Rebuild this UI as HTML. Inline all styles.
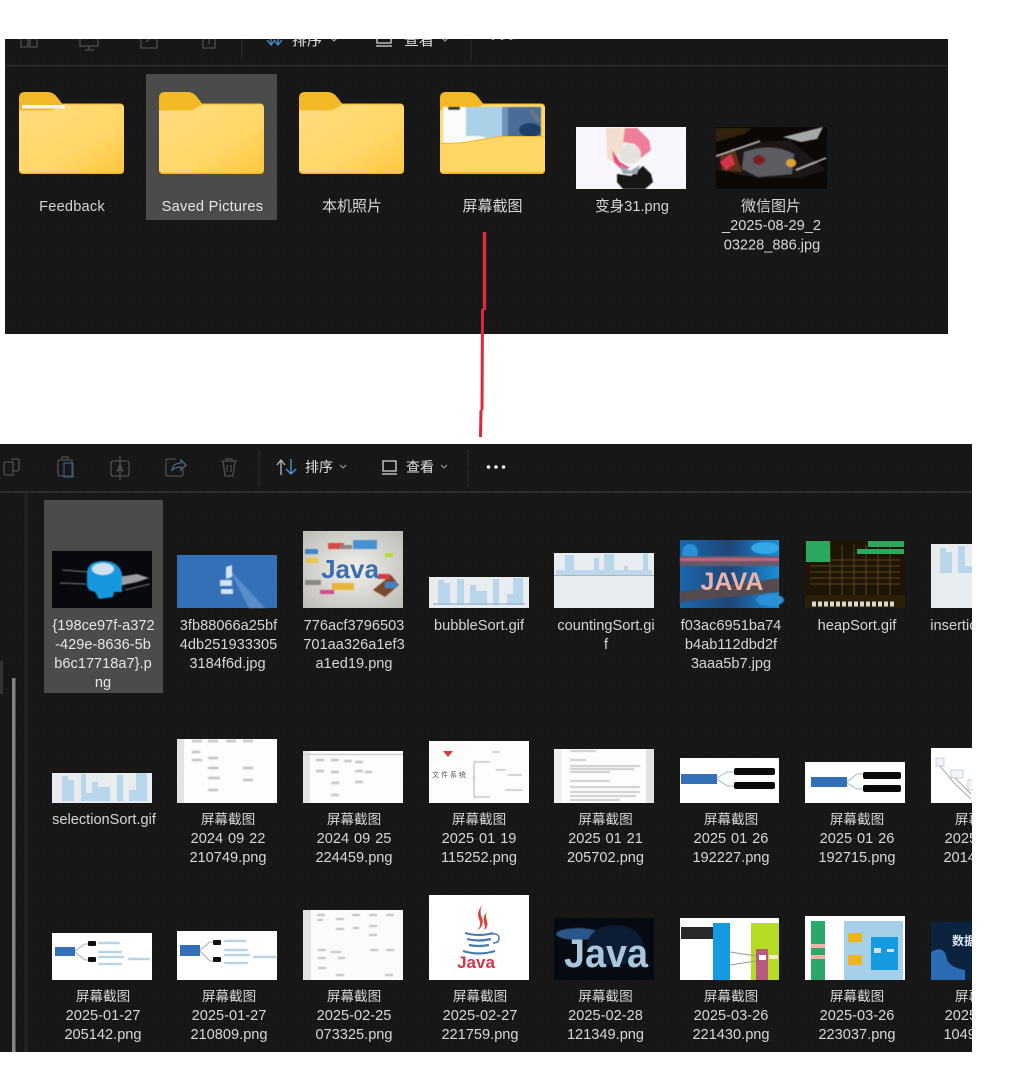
<!DOCTYPE html>
<html lang="zh">
<head>
<meta charset="utf-8">
<title>文件资源管理器</title>
<style>
html,body{margin:0;padding:0;background:#fff;width:1018px;height:1070px;overflow:hidden}
svg{display:block}
text{font-family:"Liberation Sans","Noto Sans CJK SC",sans-serif;font-size:14.6px;fill:#d6d6d6;text-anchor:middle}
.c{font-size:13.6px}
.sel{fill:#e6e6e6}
.tb{font-size:14px;fill:#e0e0e0;text-anchor:start}
.ic{fill:none;stroke:#4e4e4e;stroke-width:1.3}
.ib{fill:none;stroke:#d8d8d8;stroke-width:1.3}
.bar{fill:#b7d6ec}
</style>
</head>
<body>
<svg width="1018" height="1070" viewBox="0 0 1018 1070" xmlns="http://www.w3.org/2000/svg">
<defs>
<filter id="s" x="-5%" y="-5%" width="110%" height="110%"><feGaussianBlur stdDeviation=".5"/></filter>
<linearGradient id="fg" x1="0" y1="0" x2="1" y2="1">
<stop offset="0" stop-color="#fbd6a0"/><stop offset=".14" stop-color="#ffda78"/><stop offset=".62" stop-color="#ffd768"/><stop offset="1" stop-color="#fbc73c"/>
</linearGradient>
<linearGradient id="sky" x1="0" y1="0" x2="1" y2="0">
<stop offset="0" stop-color="#1a67ad"/><stop offset=".5" stop-color="#1f4677"/><stop offset="1" stop-color="#1a8ed8"/>
</linearGradient>
<radialGradient id="jv" cx=".5" cy=".5" r=".7">
<stop offset="0" stop-color="#f3f1ec"/><stop offset="1" stop-color="#bdbbb6"/>
</radialGradient>
<pattern id="dots" width="6" height="6" patternUnits="userSpaceOnUse"><rect x="2" y="2" width="1" height="1" fill="#202020"/></pattern>
<clipPath id="p1"><rect x="5" y="39" width="943" height="295"/></clipPath>
<clipPath id="p2"><rect x="0" y="444" width="972" height="608"/></clipPath>
<g id="folder">
<path d="M0 6Q0 0 6 0H29Q34 0 38 5L43 11.500H101Q105 11.500 105 16V78Q105 82 101 82H4Q0 82 0 78Z" fill="#f2b825"/>
<path d="M0 18.500H33L43 12.500H101Q105 12.500 105 16V77Q105 80.500 101 80.500H4Q0 80.500 0 77Z" fill="url(#fg)"/>
</g>
</defs>

<rect width="1018" height="1070" fill="#fff"/>

<!-- TOP PANEL -->
<g clip-path="url(#p1)">
<rect x="5" y="39" width="943" height="295" fill="#171718"/>
<rect x="5" y="39" width="943" height="295" fill="url(#dots)"/>
<g>
<path class="ic" d="M21 32h7v15h-7zM30 32h7v15h-7z"/>
<path class="ic" d="M80 34h18v12H80zM89 46v4M85 50h9"/>
<path class="ic" d="M141 33h16v15h-16zM146 42l8-7"/>
<path class="ic" d="M203 30h12v18h-12zM209 37v7"/>
<path d="M242 25V60" stroke="#2b2b2b"/>
<path d="M471 25V60" stroke="#2b2b2b"/>
<path class="ib" d="M271 34v11M267 40l4 5 4-5" style="stroke:#4a90d0"/>
<path class="ib" d="M278 32v13M274 40l4 5 4-5" style="stroke:#4a90d0"/>
<text class="tb" x="292" y="45" style="font-size:15px">排序</text>
<path d="M331 38l3 3 3-3" class="ic" style="stroke:#999"/>
<path class="ib" d="M377 32h14v11h-14zM376 46h16"/>
<text class="tb" x="404" y="45" style="font-size:15px">查看</text>
<path d="M442 38l3 3 3-3" class="ic" style="stroke:#999"/>
<circle cx="493" cy="38" r="1.800" fill="#e8e8e8"/><circle cx="502" cy="38" r="1.800" fill="#e8e8e8"/><circle cx="511" cy="38" r="1.800" fill="#e8e8e8"/>
</g>
<rect x="5" y="65" width="943" height="1.500" fill="#2e2e2e"/>

<rect x="146" y="74" width="131" height="146" rx="1" fill="#4b4b4b"/>

<use href="#folder" x="19" y="92"/>
<rect x="22" y="105" width="43" height="3.500" fill="#f4f2ee"/>
<use href="#folder" x="159" y="92"/>
<use href="#folder" x="299" y="92"/>

<!-- folder with preview -->
<use href="#folder" x="440" y="92"/>
<g filter="url(#s)">
<rect x="443" y="107" width="98" height="36" fill="#6d93bd"/>
<rect x="443" y="107" width="24" height="36" fill="#fbfbfb"/>
<rect x="466" y="107" width="36" height="36" fill="#a9d2e8"/>
<ellipse cx="474" cy="140" rx="14" ry="4" fill="#fff"/>
<rect x="508" y="107" width="33" height="30" fill="#4a6d96"/>
<ellipse cx="530" cy="130" rx="11" ry="7" fill="#1f3f68"/>
<path d="M448 107h12v3h-12z" fill="#333"/>
<path d="M531 110l8 12" stroke="#6e7680" stroke-width="4"/>
</g>
<path d="M440 143Q460 143 470 141L487 138Q500 136 505 136H541Q545 136 545 140V170Q545 174 541 174H444Q440 174 440 170Z" fill="#f4b926"/>
<path d="M440 144Q460 144 470 142L487 139Q500 137 505 137H541Q545 137 545 140V169Q545 172 541 172H444Q440 172 440 169Z" fill="#ffd665"/>

<text x="72" y="211" style="letter-spacing:.2px">Feedback</text>
<text x="212.500" y="211" class="sel" style="letter-spacing:.25px">Saved Pictures</text>
<text x="352" y="211" class="c" style="font-size:15px">本机照片</text>
<text x="492.500" y="211" class="c" style="font-size:15px">屏幕截图</text>

<!-- 变身31 -->
<rect x="576" y="127" width="110" height="62" fill="#f8f6fb"/>
<g filter="url(#s)">
<path d="M606 128h22l-3 14-12 20-6-4z" fill="#f3ddd0"/>
<path d="M625 128h12l12 12 2 10-10 8-6-14-12-2z" fill="#ee7f98"/>
<path d="M612 150l8 12 10 6-8 2-8-8z" fill="#e8527a"/>
<ellipse cx="630" cy="154" rx="11" ry="10" fill="#e4e2dc"/>
<path d="M617 174l14 2 12-10 8 8 2 8-8 7h-22l-6-7z" fill="#141416"/>
<path d="M620 165l10 6 10-6-3 9h-14z" fill="#9aa7b2"/>
</g>
<text x="632" y="211">变身31.png</text>

<!-- 微信图片 -->
<rect x="716" y="127" width="111" height="62" fill="#0c0805"/>
<g filter="url(#s)">
<path d="M716 128h36l-8 6-28 8z" fill="#33210a"/>
<path d="M716 155L760 142 790 140 826 170 800 178 760 178 716 170z" fill="#1a1819"/>
<path d="M744 152q28-10 50 2l-2 20-34 3-16-8z" fill="#5c5c62"/>
<path d="M720 156l14-8 8 24-20-2z" fill="#5d3218"/>
<path d="M720 162l11-8 4 10-9 6z" fill="#d8324a"/>
<path d="M783 137l40-10-6 12-16 3z" fill="#a8a8a8"/>
<path d="M716 156l44-15M796 170l30-12" stroke="#b3b3b3" stroke-width="1.500" fill="none"/>
<ellipse cx="759" cy="160" rx="6" ry="5" fill="#7a2422"/><ellipse cx="791" cy="163" rx="5" ry="4" fill="#d9a23a"/>
</g>
<text x="771" y="211" class="c" style="font-size:15px">微信图片</text>
<text x="771.500" y="230">_2025-08-29_2</text>
<text x="772" y="249.500">03228_886.jpg</text>
</g>

<!-- RED LINE -->
<path d="M484.500 232V310" stroke="#dc2a38" stroke-width="3.500" fill="none"/>
<path d="M482.500 309L482 410" stroke="#dc2a38" stroke-width="3" fill="none"/>
<path d="M481 410L480.500 437" stroke="#dc2a38" stroke-width="3" fill="none"/>

<!-- BOTTOM PANEL -->
<g clip-path="url(#p2)">
<rect x="0" y="444" width="972" height="608" fill="#171718"/>
<rect x="0" y="444" width="972" height="608" fill="url(#dots)"/>

<!-- toolbar -->
<path class="ic" d="M4 464q0-2 2-2h7v13H6q-2 0-2-2zM11 459h6q2 0 2 2v8q0 2-2 2h-5"/>
<path class="ic" d="M58 462q0-2 2-2h12v16H60q-2 0-2-2zM62 460v-3h6v3"/>
<path d="M64 463h9v14h-9z" fill="none" stroke="#2d5f8e" stroke-width="1.200"/>
<path class="ic" d="M111 463q0-2 2-2h14q2 0 2 2v11q0 2-2 2h-14q-2 0-2-2zM120 456v24"/>
<path d="M117 472l3-8 3 8M118 470h4" class="ic"/>
<path class="ic" d="M176 459h-8q-2 0-2 2v13q0 2 2 2h13q2 0 2-2v-4"/>
<path class="ic" d="M172 470q1-7 9-7v-3l5 5-5 5v-3q-5 0-9 3z" style="stroke:#4a6888"/>
<path class="ic" d="M221 461h16M226 461v-2h6v2M223 461l2 15h8l2-15M227 465v7M231 465v7"/>
<path d="M259 449V487M468 449V487" stroke="#2b2b2b"/>
<path d="M281 475V461M277 465l4-5 4 5" class="ib" style="stroke:#bcbcbc"/>
<path d="M291 459V474M286 469l5 5 5-5" class="ib" style="stroke:#4a9ae0"/>
<text class="tb" x="305" y="472">排序</text>
<path d="M340 465l3 3 3-3" class="ic" style="stroke:#888"/>
<path class="ib" d="M383 461h13v10h-13zM382 474h15"/>
<text class="tb" x="406" y="472">查看</text>
<path d="M441 465l3 3 3-3" class="ic" style="stroke:#888"/>
<circle cx="488.500" cy="467" r="1.800" fill="#eee"/><circle cx="496" cy="467" r="1.800" fill="#eee"/><circle cx="503.500" cy="467" r="1.800" fill="#eee"/>
<rect x="0" y="491" width="972" height="2" fill="#2c2c2c"/>

<!-- sidebar -->
<rect x="24" y="493" width="4" height="559" fill="#212121"/>
<rect x="0" y="661" width="3" height="33" fill="#333"/>
<rect x="12" y="678" width="3.500" height="374" fill="#858585"/>

<rect x="44" y="500" width="119" height="193" rx="1" fill="#4b4b4b"/>

<!-- ROW 1 -->
<rect x="52" y="551" width="100" height="57" fill="#08090c"/>
<g filter="url(#s)">
<path d="M62 570L88 572M118 576l24 3M60 583l26 1M125 590l25-6" stroke="#777" stroke-width="1" fill="none"/>
<path d="M119 577l18-3 12 4-12 4-18 4z" fill="#9c9ea3"/>
<path d="M87 586V574Q87 561 103 561Q119 561 122 574L122 592 114 592 113 597 99 599 95 592 89 590Z" fill="#1398de"/>
<ellipse cx="103" cy="569" rx="11" ry="6" fill="#cfe3ee"/>
</g>

<rect x="177" y="555" width="100" height="53" fill="#3470b8"/>
<g filter="url(#s)">
<path d="M229 569l20 39h16z" fill="#5a8ecb"/>
<path d="M226 567l6-2v12l-6 2zM220 580h12v6h-12zM221 589h12v5h-12z" fill="#d5e2f0"/>
</g>

<rect x="303" y="531" width="100" height="77" fill="url(#jv)"/>
<g filter="url(#s)">
<rect x="353" y="540" width="24" height="9" fill="#4a90d0"/>
<rect x="328" y="543" width="16" height="6" fill="#d64a4a"/>
<rect x="305" y="549" width="13" height="5" fill="#3f84c8"/>
<rect x="306" y="558" width="12" height="5" fill="#e8c84a"/>
<rect x="340" y="545" width="12" height="4" fill="#888"/>
<rect x="385" y="553" width="8" height="4" fill="#b8d830"/>
<path d="M373 590l18-15 8 10-14 12z" fill="#7a4a2a"/>
<rect x="332" y="583" width="22" height="7" fill="#e8b53a"/>
<rect x="385" y="582" width="12" height="6" fill="#3f84c8"/>
<rect x="378" y="574" width="12" height="5" fill="#d83a3a"/>
<rect x="305" y="580" width="16" height="5" fill="#888"/>
<rect x="320" y="590" width="14" height="4" fill="#d64a8a"/>
</g>
<text x="350" y="578" style="font-size:26px;font-weight:bold;fill:#3c6faf">Java</text>

<rect x="429" y="577" width="100" height="31" fill="#e9ecef"/>
<rect class="bar" x="438" y="580" width="6" height="25"/><rect class="bar" x="444" y="583" width="6" height="22"/><rect class="bar" x="457" y="579" width="7" height="26"/><rect class="bar" x="470" y="585" width="6" height="20"/><rect class="bar" x="476" y="591" width="11" height="14"/><rect class="bar" x="493" y="579" width="6" height="26"/><rect class="bar" x="507" y="594" width="6" height="11"/><rect class="bar" x="513" y="578" width="10" height="27"/>
<path d="M433 604h92" stroke="#9fbdd4" stroke-width="1.500"/>

<rect x="554" y="553" width="100" height="55" fill="#e9ecef"/>
<rect x="556" y="570" width="96" height="5" fill="#bcd8ea"/>
<rect class="bar" x="565" y="555" width="9" height="15"/><rect class="bar" x="594" y="558" width="5" height="12"/><rect class="bar" x="604" y="554" width="10" height="16"/><rect class="bar" x="624" y="566" width="4" height="5"/><rect class="bar" x="643" y="553" width="5" height="18"/>
<path d="M554 575.500h100" stroke="#b0b5ba"/>

<rect x="680" y="540" width="99" height="68" fill="url(#sky)"/>
<g filter="url(#s)">
<ellipse cx="690" cy="552" rx="8" ry="8" fill="#2a90d8"/>
<ellipse cx="765" cy="548" rx="14" ry="6" fill="#30a8e8"/>
<rect x="680" y="556" width="99" height="10" fill="#665a68"/>
<path d="M680 558h99v3h-99z" fill="#c2607e"/>
<path d="M680 592l99-14v14l-99 10z" fill="#544c50"/>
<ellipse cx="770" cy="600" rx="14" ry="6" fill="#2a90d8"/>
</g>
<text x="732" y="590" style="font-size:25px;font-weight:bold;fill:#eeb2a6">JAVA</text>

<rect x="805" y="540" width="100" height="68" fill="#1f1506"/>
<path d="M810 560h90M810 566h90M810 572h90M810 578h90M810 584h90M830 545v50M842 545v50M854 545v50M866 545v50M878 545v50M890 545v50" stroke="#5a4518" stroke-width="1"/>
<rect x="805" y="595" width="100" height="13" fill="#2d1f07"/>
<rect x="806" y="541" width="24" height="21" fill="#2aa860"/>
<rect x="868" y="541" width="36" height="6" fill="#2aa860"/>
<rect x="857" y="549" width="47" height="5" fill="#2aa860"/>
<path d="M812 604h82" stroke="#d8d8d8" stroke-width="5" stroke-dasharray="4 2"/>

<rect x="931" y="544" width="50" height="64" fill="#e9ecef"/>
<rect class="bar" x="940" y="548" width="6" height="25"/><rect class="bar" x="946" y="552" width="6" height="21"/><rect class="bar" x="958" y="546" width="7" height="27"/><rect class="bar" x="965" y="566" width="7" height="7"/>

<text x="103.500" y="630" class="sel">{198ce97f-a372</text>
<text x="103" y="649" class="sel">-429e-8636-5b</text>
<text x="103" y="668" class="sel">b6c17718a7}.p</text>
<text x="103" y="687" class="sel">ng</text>
<text x="228.500" y="630">3fb88066a25bf</text>
<text x="228.500" y="649">4db251933305</text>
<text x="227.500" y="668">3184f6d.jpg</text>
<text x="354" y="630">776acf3796503</text>
<text x="354" y="649">701aa326a1ef3</text>
<text x="354" y="668">a1ed19.png</text>
<text x="479" y="630">bubbleSort.gif</text>
<text x="606" y="630">countingSort.gi</text>
<text x="606" y="649">f</text>
<text x="731" y="630">f03ac6951ba74</text>
<text x="731" y="649">b4ab112dbd2f</text>
<text x="731" y="668">3aaa5b7.jpg</text>
<text x="857" y="630">heapSort.gif</text>
<text x="981" y="630">insertionSort.gif</text>

<!-- ROW 2 -->
<rect x="52" y="773" width="100" height="30" fill="#e9ecef"/>
<rect class="bar" x="62" y="776" width="6" height="25"/><rect class="bar" x="68" y="780" width="6" height="21"/><rect class="bar" x="81" y="774" width="5" height="27"/><rect class="bar" x="86" y="793" width="6" height="8"/><rect class="bar" x="92" y="782" width="6" height="19"/><rect class="bar" x="98" y="787" width="12" height="14"/><rect class="bar" x="117" y="775" width="6" height="26"/><rect class="bar" x="129" y="790" width="7" height="11"/><rect class="bar" x="136" y="773" width="11" height="28"/>

<rect x="177" y="739" width="100" height="64" fill="#fdfdfd"/>
<rect x="177" y="739" width="7" height="64" fill="#e2e2e2"/>
<g filter="url(#s)"><path d="M192 741h10M192 752h8M192 760h10M208 741h10M208 758h10M208 768h10M208 778h12M208 790h10M226 741h10M243 741h10M243 768h10M243 780h10" stroke="#c4c4c4" stroke-width="2.500"/></g>

<rect x="303" y="751" width="100" height="52" fill="#fdfdfd"/>
<rect x="303" y="751" width="7" height="52" fill="#e2e2e2"/>
<path d="M303 754.500h100" stroke="#d0d0d0" stroke-width="1.500"/>
<g filter="url(#s)"><path d="M316 760h8M316 771h8M331 760h8M331 772h8M331 783h8M331 795h8M344 761h8M355 762h8M355 771h8M355 782h8M365 772h7" stroke="#c4c4c4" stroke-width="2.500"/></g>

<rect x="429" y="741" width="100" height="62" fill="#fdfdfd"/>
<path d="M443 751h10l-5 6z" fill="#d43a44"/>
<text x="449" y="777" style="font-size:7px;fill:#555">文 件 系 统</text>
<g filter="url(#s)"><path d="M476 761q-2 0-2 3v31q0 3 2 3M475 778h-2M492 752h8M496 770h10M508 775h14M505 790h18" stroke="#aaa" fill="none"/>
<path d="M476 762h14M476 797h14" stroke="#aaa"/></g>

<rect x="554" y="749" width="100" height="54" fill="#fdfdfd"/>
<rect x="554" y="749" width="8" height="54" fill="#eeeeee"/>
<rect x="646" y="749" width="8" height="54" fill="#e2e2e2"/>
<g filter="url(#s)"><path d="M570 751h26M570 760h16M570 766h70M570 769h64M570 772h40M570 781h40M570 787h70M570 792h70M570 796h66M570 800h50" stroke="#b0b0b0" stroke-width="1.200"/></g>

<rect x="680" y="758" width="99" height="45" fill="#fff"/>
<rect x="681" y="774" width="36" height="10" fill="#3470b8"/>
<rect x="734" y="768" width="41" height="7" rx="2" fill="#0a0a0a"/>
<rect x="734" y="782" width="41" height="7" rx="2" fill="#0a0a0a"/>
<path d="M717 778l10-6h7M717 779l10 7h7" stroke="#9fb6c9" fill="none"/>

<rect x="805" y="762" width="100" height="41" fill="#fff"/>
<rect x="811" y="777" width="36" height="10" fill="#3470b8"/>
<rect x="863" y="772" width="38" height="7" rx="2" fill="#0a0a0a"/>
<rect x="863" y="785" width="38" height="7" rx="2" fill="#0a0a0a"/>
<path d="M847 782l10-8h6M847 783l10 6h6" stroke="#9fb6c9" fill="none"/>

<rect x="931" y="748" width="50" height="55" fill="#fff"/>
<path d="M936 758h8v8h-8zM951 770h12v8h-12zM968 780h8v10h-8z" fill="#f2f5f8" stroke="#c5d2dc"/>
<path d="M940 766l15 18 16 15M955 778l16 16" stroke="#aaa" fill="none"/>

<text x="104" y="824">selectionSort.gif</text>
<text x="228" y="824" class="c">屏幕截图</text>
<text x="228" y="843">2024<tspan fill-opacity=".1">-</tspan>09<tspan fill-opacity=".1">-</tspan>22</text>
<text x="228" y="862">210749.png</text>
<text x="354" y="824" class="c">屏幕截图</text>
<text x="354" y="843">2024<tspan fill-opacity=".1">-</tspan>09<tspan fill-opacity=".1">-</tspan>25</text>
<text x="354" y="862">224459.png</text>
<text x="479" y="824" class="c">屏幕截图</text>
<text x="479" y="843">2025<tspan fill-opacity=".1">-</tspan>01<tspan fill-opacity=".1">-</tspan>19</text>
<text x="479" y="862">115252.png</text>
<text x="605.500" y="824" class="c">屏幕截图</text>
<text x="605.500" y="843">2025<tspan fill-opacity=".1">-</tspan>01<tspan fill-opacity=".1">-</tspan>21</text>
<text x="605.500" y="862">205702.png</text>
<text x="731" y="824" class="c">屏幕截图</text>
<text x="731" y="843">2025<tspan fill-opacity=".1">-</tspan>01<tspan fill-opacity=".1">-</tspan>26</text>
<text x="731" y="862">192227.png</text>
<text x="857" y="824" class="c">屏幕截图</text>
<text x="857" y="843">2025<tspan fill-opacity=".1">-</tspan>01<tspan fill-opacity=".1">-</tspan>26</text>
<text x="857" y="862">192715.png</text>
<text x="982" y="824" class="c">屏幕截图</text>
<text x="982" y="843">2025<tspan fill-opacity=".1">-</tspan>02<tspan fill-opacity=".1">-</tspan>10</text>
<text x="982" y="862">201452.png</text>

<!-- ROW 3 -->
<rect x="52" y="933" width="100" height="47" fill="#fff"/>
<rect x="55" y="947" width="20" height="9" fill="#3470b8"/>
<path d="M75 951l10-7h6M75 952l10 8h6" stroke="#aaa" fill="none"/>
<rect x="88" y="941" width="8" height="5" rx="1" fill="#111"/><rect x="88" y="957" width="8" height="5" rx="1" fill="#111"/>
<g filter="url(#s)"><path d="M98 943h22M98 952h24M98 957h26M98 964h24M128 959h22" stroke="#a9c8de" stroke-width="2"/></g>

<rect x="177" y="931" width="100" height="49" fill="#fff"/>
<rect x="180" y="945" width="20" height="11" fill="#3470b8"/>
<path d="M200 950l10-8h5M200 951l10 10h5" stroke="#aaa" fill="none"/>
<rect x="213" y="940" width="8" height="5" rx="1" fill="#111"/><rect x="213" y="957" width="8" height="5" rx="1" fill="#111"/>
<g filter="url(#s)"><path d="M224 941h22M224 950h24M224 955h26M224 963h24M253 957h24" stroke="#a9c8de" stroke-width="2"/></g>

<rect x="303" y="910" width="100" height="70" fill="#fbfbfb"/>
<rect x="303" y="910" width="8" height="70" fill="#e2e2e2"/>
<g filter="url(#s)"><path d="M317 915h8M317 920h6M336 919h8M336 929h8M352 915h8M353 928h6M369 915h8M369 926h8M369 935h8M386 915h8M318 950h8M318 958h8M318 968h8M331 952h10M338 958h7M370 950h8M386 950h8M336 975h8M385 975h8" stroke="#c0c0c0" stroke-width="2"/></g>

<rect x="429" y="895" width="100" height="85" fill="#fff"/>
<path d="M482 905q-6 8-3 14t-2 12q8-6 5-13t0-13zM487 912q-5 5-3 11t-1 8q6-4 4-10t0-9z" fill="#d04a3c"/>
<path d="M465 933q14 4 28 0M467 939q11 3 24 0M469 945q9 2 20 0M463 951q16 5 32 0" stroke="#4a7bab" stroke-width="2.200" fill="none"/>
<path d="M491 934q8-1 8 4t-6 5" stroke="#4a7bab" stroke-width="1.500" fill="none"/>
<text x="476" y="968" style="font-size:17px;font-weight:bold;fill:#c9394a">Java</text>

<rect x="554" y="918" width="100" height="62" fill="#060a12"/>
<g filter="url(#s)">
<ellipse cx="578" cy="934" rx="22" ry="6" fill="#2b5688"/>
<ellipse cx="615" cy="945" rx="28" ry="20" fill="#0e1f36"/>
</g>
<text x="606" y="967" style="font-size:40px;font-weight:bold;fill:#a8c6dc" textLength="84" lengthAdjust="spacingAndGlyphs">Java</text>

<rect x="680" y="918" width="99" height="62" fill="#fff"/>
<rect x="681" y="927" width="32" height="12" fill="#2a2a2a"/>
<rect x="713" y="923" width="17" height="57" fill="#139ae0"/>
<rect x="751" y="923" width="28" height="57" fill="#b4dc22"/>
<rect x="756" y="949" width="12" height="31" fill="#b85a80"/>
<rect x="759" y="955" width="7" height="5" fill="#fff"/>
<rect x="769" y="955" width="9" height="4" fill="#f6e6d8"/>
<path d="M730 952l26 4M730 965l26-4" stroke="#999"/>

<rect x="805" y="916" width="100" height="64" fill="#fff"/>
<rect x="811" y="921" width="14" height="59" fill="#2aa868"/>
<rect x="811" y="944" width="14" height="4" fill="#f2b4a8"/>
<rect x="811" y="955" width="14" height="4" fill="#f2b4a8"/>
<rect x="844" y="921" width="59" height="59" fill="#a6cfe8"/>
<rect x="871" y="937" width="27" height="33" fill="#139ae0"/>
<rect x="848" y="933" width="14" height="9" fill="#f0b41e"/>
<rect x="848" y="955" width="14" height="10" fill="#f0b41e"/>
<rect x="874" y="948" width="7" height="5" fill="#ddd"/>
<rect x="887" y="949" width="7" height="3" fill="#ddd"/>

<rect x="931" y="922" width="50" height="58" fill="#0c2340"/>
<path d="M931 952q14-8 16 8 4 8 18 10v10h-34z" fill="#2a6db5"/>
<text x="964" y="945" style="font-size:12px;font-weight:bold;fill:#dfe8f0">数据</text>

<text x="103" y="1001" class="c">屏幕截图</text>
<text x="103" y="1020">2025-01-27</text>
<text x="103" y="1039">205142.png</text>
<text x="229" y="1001" class="c">屏幕截图</text>
<text x="229" y="1020">2025-01-27</text>
<text x="229" y="1039">210809.png</text>
<text x="354" y="1001" class="c">屏幕截图</text>
<text x="354" y="1020">2025-02-25</text>
<text x="354" y="1039">073325.png</text>
<text x="480" y="1001" class="c">屏幕截图</text>
<text x="480" y="1020">2025-02-27</text>
<text x="480" y="1039">221759.png</text>
<text x="605.500" y="1001" class="c">屏幕截图</text>
<text x="605.500" y="1020">2025-02-28</text>
<text x="605.500" y="1039">121349.png</text>
<text x="731" y="1001" class="c">屏幕截图</text>
<text x="731" y="1020">2025-03-26</text>
<text x="731" y="1039">221430.png</text>
<text x="857" y="1001" class="c">屏幕截图</text>
<text x="857" y="1020">2025-03-26</text>
<text x="857" y="1039">223037.png</text>
<text x="982" y="1001" class="c">屏幕截图</text>
<text x="982" y="1020">2025-03-27</text>
<text x="982" y="1039">104912.png</text>
</g>
</svg>
</body>
</html>
